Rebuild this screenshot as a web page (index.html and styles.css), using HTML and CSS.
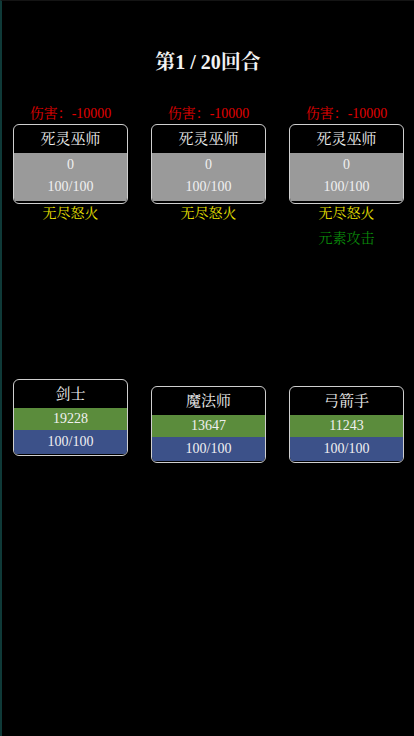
FILE: index.html
```html
<!DOCTYPE html>
<html lang="zh">
<head>
<meta charset="utf-8">
<title>回合</title>
<link rel="stylesheet" href="styles.css">
</head>
<body>
<div class="screen">
  <h1 class="title">第1 / 20回合</h1>

  <div class="row enemies">
    <div class="unit">
      <div class="damage">伤害：-10000</div>
      <div class="card">
        <div class="name">死灵巫师</div>
        <div class="stat gray first">0</div>
        <div class="stat gray last">100/100</div>
      </div>
      <div class="skill yellow">无尽怒火</div>
    </div>
    <div class="unit">
      <div class="damage">伤害：-10000</div>
      <div class="card">
        <div class="name">死灵巫师</div>
        <div class="stat gray first">0</div>
        <div class="stat gray last">100/100</div>
      </div>
      <div class="skill yellow">无尽怒火</div>
    </div>
    <div class="unit">
      <div class="damage">伤害：-10000</div>
      <div class="card">
        <div class="name">死灵巫师</div>
        <div class="stat gray first">0</div>
        <div class="stat gray last">100/100</div>
      </div>
      <div class="skill yellow">无尽怒火</div>
      <div class="skill green">元素攻击</div>
    </div>
  </div>

  <div class="row heroes">
    <div class="card hero active">
      <div class="name">剑士</div>
      <div class="stat hp">19228</div>
      <div class="stat mp">100/100</div>
    </div>
    <div class="card hero">
      <div class="name">魔法师</div>
      <div class="stat hp">13647</div>
      <div class="stat mp">100/100</div>
    </div>
    <div class="card hero">
      <div class="name">弓箭手</div>
      <div class="stat hp">11243</div>
      <div class="stat mp">100/100</div>
    </div>
  </div>
</div>
</body>
</html>
```

FILE: styles.css
```css
html, body {
  margin: 0;
  padding: 0;
  background: #000;
}
body {
  font-family: "Liberation Serif", "Noto Serif CJK SC", "Noto Sans CJK SC", serif;
  color: #f0f0f0;
}
.screen {
  width: 414px;
  height: 736px;
  box-sizing: border-box;
  border-left: 2px solid #0f3a38;
  border-top: 1px solid #141414;
  overflow: hidden;
}
.title {
  margin: 49px 0 0;
  font-size: 20px;
  line-height: 24px;
  font-weight: bold;
  text-align: center;
  color: #f2f2f2;
}
.row {
  display: grid;
  grid-template-columns: repeat(3, 115px);
  column-gap: 23px;
  padding-left: 11px;
}
.enemies {
  margin-top: 30px;
  align-items: start;
}
.unit {
  display: flex;
  flex-direction: column;
  align-items: stretch;
  text-align: center;
}
.damage {
  color: #e00000;
  font-size: 14px;
  line-height: 20px;
}
.card {
  border: 1.5px solid #cfcfcf;
  border-radius: 6px;
  background: #000;
  overflow: hidden;
  padding-bottom: 1.5px;
  text-align: center;
}
.name {
  font-size: 15px;
  line-height: 28px;
  color: #f0f0f0;
}
.stat {
  font-size: 14px;
  line-height: 22px;
  color: #f0f0f0;
}
.gray {
  background: #9a9a9a;
}
.gray.first {
  padding-top: 1px;
}
.gray.last {
  padding-bottom: 3px;
}
.skill {
  font-size: 14px;
  line-height: 24px;
}
.yellow {
  color: #e8e000;
  margin-top: -2px;
}
.green {
  color: #0a8a0a;
  margin-top: 1px;
}
.heroes {
  margin-top: 128px;
  align-items: start;
}
.hero {
  margin-top: 7px;
}
.hero.active {
  margin-top: 0;
}
.hp {
  background: #5b8c3c;
}
.mp {
  background: #3c5189;
  line-height: 24px;
}
```
